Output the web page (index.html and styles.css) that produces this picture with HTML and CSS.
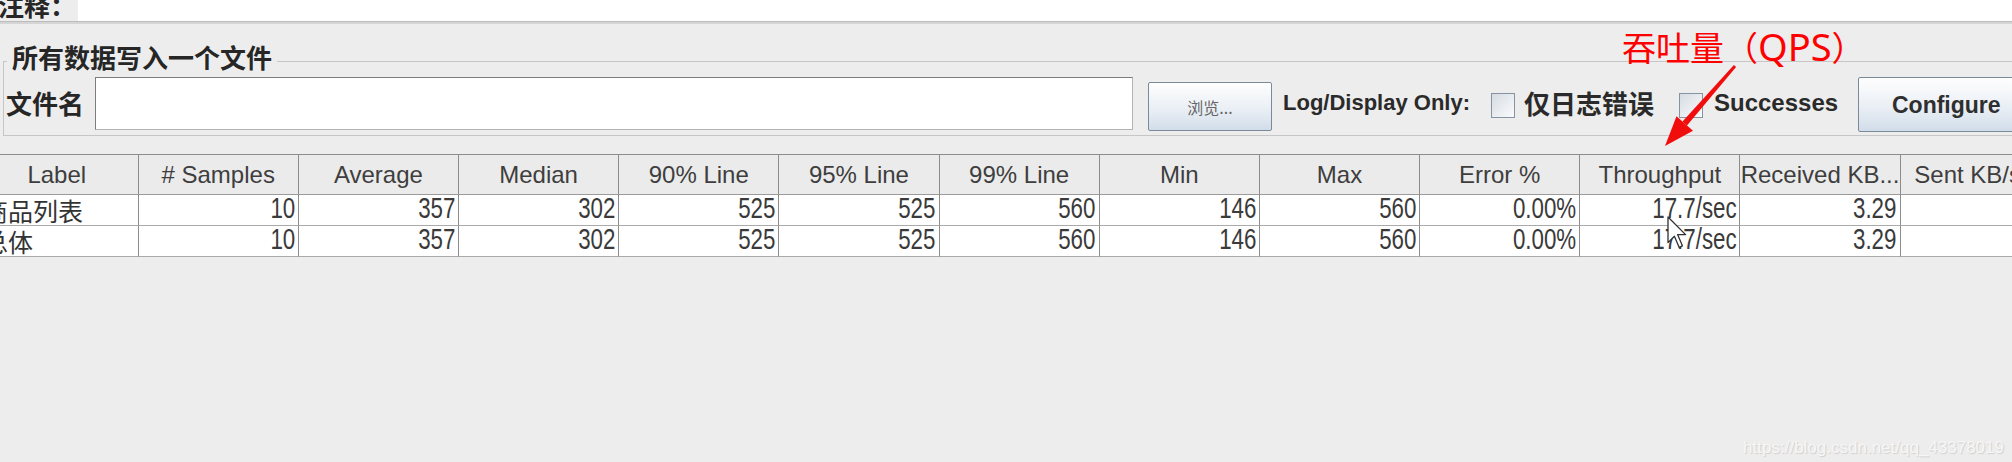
FILE: index.html
```html
<!DOCTYPE html>
<html lang="zh-CN">
<head>
<meta charset="utf-8">
<title>聚合报告</title>
<link rel="stylesheet" href="styles.css">
</head>
<body>
<div class="page">
  <div class="comment-row">
    <span class="comment-label">注释：</span>
    <div class="comment-field"></div>
  </div>
  <div class="sep"></div>
  <fieldset class="group">
    <legend class="group-title">所有数据写入一个文件</legend>
    <div class="file-row">
      <span class="file-label">文件名</span>
      <div class="file-input"></div>
      <button class="btn browse">浏览...</button>
      <span class="log-label">Log/Display Only:</span>
      <span class="check"></span>
      <span class="check-label cjk">仅日志错误</span>
      <span class="check"></span>
      <span class="check-label en">Successes</span>
      <button class="btn configure">Configure</button>
    </div>
  </fieldset>
  <table class="results">
    <colgroup>
      <col class="c-first"><col class="c"><col class="c"><col class="c"><col class="c"><col class="c"><col class="c"><col class="c"><col class="c"><col class="c"><col class="c"><col class="c"><col class="c">
    </colgroup>
    <thead>
      <tr>
        <th>Label</th><th># Samples</th><th>Average</th><th>Median</th><th>90% Line</th><th>95% Line</th><th>99% Line</th><th>Min</th><th>Max</th><th>Error %</th><th>Throughput</th><th>Received KB...</th><th>Sent KB/sec</th>
      </tr>
    </thead>
    <tbody>
      <tr>
        <td class="lbl">商品列表</td><td><span class="n">10</span></td><td><span class="n">357</span></td><td><span class="n">302</span></td><td><span class="n">525</span></td><td><span class="n">525</span></td><td><span class="n">560</span></td><td><span class="n">146</span></td><td><span class="n">560</span></td><td><span class="n">0.00%</span></td><td><span class="n">17.7/sec</span></td><td><span class="n">3.29</span></td><td><span class="n">2.05</span></td>
      </tr>
      <tr>
        <td class="lbl">总体</td><td><span class="n">10</span></td><td><span class="n">357</span></td><td><span class="n">302</span></td><td><span class="n">525</span></td><td><span class="n">525</span></td><td><span class="n">560</span></td><td><span class="n">146</span></td><td><span class="n">560</span></td><td><span class="n">0.00%</span></td><td><span class="n">17.7/sec</span></td><td><span class="n">3.29</span></td><td><span class="n">2.05</span></td>
      </tr>
    </tbody>
  </table>
  <div class="footer"><span class="watermark">https://blog.csdn.net/qq_43378019</span></div>

  <div class="annotation">吞吐量（<span class="qps">QPS</span>）</div>
  <svg class="arrow" viewBox="0 0 110 100" aria-hidden="true">
    <polygon points="96.1,12 93.9,10 42.5,66.4 47,70.4" />
    <polygon points="25,91 53,75.7 36.5,61.2" />
  </svg>
  <svg class="cursor" viewBox="0 0 22 34" aria-hidden="true">
    <polygon points="1,1 1,26.6 7.4,20.2 12.2,31.4 15.4,29.8 10.6,18.6 18.6,18.6" />
  </svg>
</div>
</body>
</html>
```

FILE: styles.css
```css
html, body {
  margin: 0;
  padding: 0;
  overflow: hidden;
}

body {
  width: 2012px;
  height: 462px;
  background: #ededed;
  font-family: "Liberation Sans", Arial, sans-serif;
}

.page {
  position: relative;
  width: 2012px;
  height: 462px;
  overflow: hidden;
}

/* top comment row */
.comment-row {
  display: flex;
  height: 21px;
  overflow: hidden;
}

.comment-label {
  flex: none;
  width: 80px;
  margin-left: -2px;
  margin-top: -8px;
  font: bold 26px/25px "Noto Sans CJK SC", sans-serif;
  color: #262626;
  white-space: nowrap;
}

.comment-field {
  flex: 1;
  background: #ffffff;
}

.sep {
  height: 2px;
  border-top: 1px solid #bcbcbc;
  background: #d5d5d5;
}

/* titled group */
.group {
  margin: 21px -40px 0 3px;
  padding: 0 0 3px 2px;
  border: 1px solid #c6c6c6;
  min-width: 0;
}

.group-title {
  margin-left: 1px;
  padding: 0 5px 8px;
  font: bold 26px/24px "Noto Sans CJK SC", sans-serif;
  color: #262626;
}

.file-row {
  display: flex;
  align-items: flex-start;
  height: 55px;
}

.file-label {
  flex: none;
  width: 89px;
  font: bold 26px/51px "Noto Sans CJK SC", sans-serif;
  color: #262626;
}

.file-input {
  flex: none;
  box-sizing: border-box;
  width: 1038px;
  height: 53px;
  background: #ffffff;
  border: 1px solid;
  border-color: #7d7d7d #b3b3b3 #b3b3b3 #7d7d7d;
}

.btn {
  flex: none;
  box-sizing: border-box;
  padding: 0;
  border: 1px solid #7b8a9b;
  border-radius: 2px;
  background: linear-gradient(#fefefe, #eaeff5 55%, #d2ddea);
}

.browse {
  width: 124px;
  height: 49px;
  margin: 5px 0 0 15px;
  font: 16px/20px "Noto Sans CJK SC", sans-serif;
  color: #666666;
}

.log-label {
  flex: none;
  width: 208px;
  margin-left: 11px;
  font: bold 22px/51px "Liberation Sans", Arial, sans-serif;
  color: #2a2a2a;
  white-space: nowrap;
}

.check {
  flex: none;
  box-sizing: border-box;
  width: 24px;
  height: 25px;
  margin-top: 16px;
  border: 1px solid #8593a2;
  background: linear-gradient(135deg, #d6dce3, #fafbfc);
}

.check-label {
  flex: none;
  white-space: nowrap;
  color: #2a2a2a;
}

.check-label.cjk {
  width: 155px;
  margin-left: 9px;
  font: bold 26px/51px "Noto Sans CJK SC", sans-serif;
}

.check-label.en {
  width: 144px;
  margin-left: 11px;
  font: bold 24px/51px "Liberation Sans", Arial, sans-serif;
}

.configure {
  width: 170px;
  height: 55px;
  padding-left: 33px;
  text-align: left;
  font: bold 23px/30px "Liberation Sans", Arial, sans-serif;
  color: #2f2f2f;
}

/* results table */
.results {
  margin: 18px 0 0 -24px;
  width: 2085px;
  border-spacing: 0;
  table-layout: fixed;
}

.results col.c-first { width: 162.6px; }
.results col.c { width: 160.2px; }

.results thead tr { height: 41px; }
.results tbody tr { height: 31px; }

.results th {
  padding: 0;
  background: #ebebeb;
  border-top: 1px solid #8c8c8c;
  border-right: 1px solid #8c8c8c;
  border-bottom: 1px solid #9b9b9b;
  font: normal 24px/24px "Liberation Sans", Arial, sans-serif;
  color: #3e3e3e;
  text-align: center;
  white-space: nowrap;
  overflow: hidden;
}

.results td {
  padding: 0 3px 0 0;
  background: #ffffff;
  border-right: 1px solid #8c8c8c;
  border-bottom: 1px solid #aaaaaa;
  line-height: 24px;
  text-align: right;
  white-space: nowrap;
  overflow: hidden;
}

.results td.lbl {
  padding: 0 0 0 7px;
  text-align: left;
  font: 25px/24px "Noto Sans CJK SC", sans-serif;
  color: #333333;
}

.n {
  display: inline-block;
  font: 29px/24px "Liberation Sans", Arial, sans-serif;
  color: #3a3a3a;
  transform: scaleX(0.77);
  transform-origin: 100% 50%;
}

/* footer watermark */
.footer {
  display: flex;
  justify-content: flex-end;
  align-items: flex-end;
  box-sizing: border-box;
  height: 205px;
  padding: 0 8px 4px 0;
}

.watermark {
  font: 17px/20px "Liberation Sans", Arial, sans-serif;
  color: #f6f6f6;
  text-shadow: 1px 1px 1px #cfcfcf;
}

/* red annotation overlay */
.annotation {
  position: absolute;
  left: 1622px;
  top: 27px;
  font: 34px/38px "Noto Sans CJK SC", sans-serif;
  color: #ff0000;
  white-space: nowrap;
}

.qps {
  font-family: "Noto Sans", "Noto Sans CJK SC", sans-serif;
  font-size: 38px;
}

.arrow {
  position: absolute;
  left: 1640px;
  top: 55px;
  width: 110px;
  height: 100px;
  fill: #f20d0d;
}

.cursor {
  position: absolute;
  left: 1667px;
  top: 216px;
  width: 22px;
  height: 34px;
  fill: #ffffff;
  stroke: #303030;
  stroke-width: 1.3;
  stroke-linejoin: round;
}
```
